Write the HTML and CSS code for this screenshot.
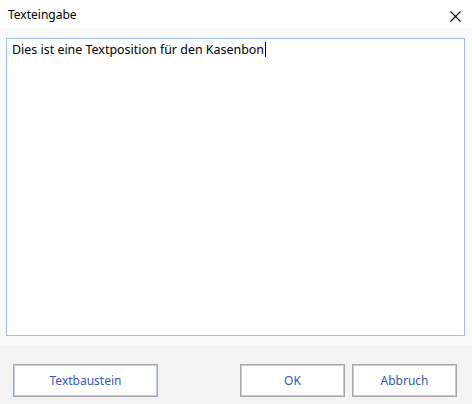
FILE: index.html
```html
<!DOCTYPE html>
<html lang="de">
<head>
<meta charset="utf-8">
<title>Texteingabe</title>
<link rel="stylesheet" href="styles.css">
</head>
<body>
<div class="dialog">
  <header class="titlebar">
    <span class="title">Texteingabe</span>
    <button class="close" aria-label="Schließen">
      <svg width="11" height="11" viewBox="0 0 11 11"><path d="M0.5 0.5 L10.5 10.5 M10.5 0.5 L0.5 10.5" stroke="#000" stroke-width="1.1" fill="none"/></svg>
    </button>
  </header>
  <main class="content">
    <div class="editor"><span class="text">Dies ist eine Textposition für den Kasenbon</span><span class="caret"></span></div>
  </main>
  <footer class="footer">
    <button class="btn btn-wide">Textbaustein</button>
    <div class="right">
      <button class="btn">OK</button>
      <button class="btn">Abbruch</button>
    </div>
  </footer>
</div>
</body>
</html>
```
FILE: styles.css
```css
* { box-sizing: border-box; }
html, body { margin: 0; padding: 0; }
body {
  width: 472px;
  height: 404px;
  overflow: hidden;
  font-family: "Noto Sans", "DejaVu Sans", sans-serif;
  font-size: 12px;
  color: #000;
}
.dialog {
  display: flex;
  flex-direction: column;
  width: 472px;
  height: 404px;
}
.titlebar {
  height: 28px;
  background: #fff;
  display: flex;
  align-items: center;
  justify-content: space-between;
  padding: 0 0 0 8px;
}
.title { font-size: 12px; }
.close {
  border: 0;
  background: transparent;
  width: 46px;
  height: 28px;
  padding: 0;
  display: flex;
  align-items: center;
  justify-content: center;
  margin-right: -6px;
  margin-top: 4px;
}
.content {
  height: 318px;
  background: #f9f9f9;
  padding: 10px 7px 10px 6px;
}
.editor {
  height: 298px;
  background: #fff;
  border: 1px solid #9dbde8;
  padding: 2px 5px;
  font-size: 12.45px;
  line-height: 18px;
  white-space: nowrap;
}
.caret {
  display: inline-block;
  width: 1px;
  height: 15px;
  background: #000;
  vertical-align: -3px;
  margin-left: 1px;
}
.footer {
  flex: 1;
  background: #f3f3f3;
  display: flex;
  justify-content: space-between;
  align-items: flex-start;
  padding: 18px 15px 0 13px;
}
.right { display: flex; gap: 7px; }
.btn {
  font-family: inherit;
  font-size: 12px;
  color: #3557b5;
  background: #fff;
  border: 1px solid #a8a8a8;
  box-shadow: inset 0 0 0 1px #c3cedd;
  width: 105px;
  height: 33px;
  padding: 0;
}
.btn-wide { width: 145px; }
```
